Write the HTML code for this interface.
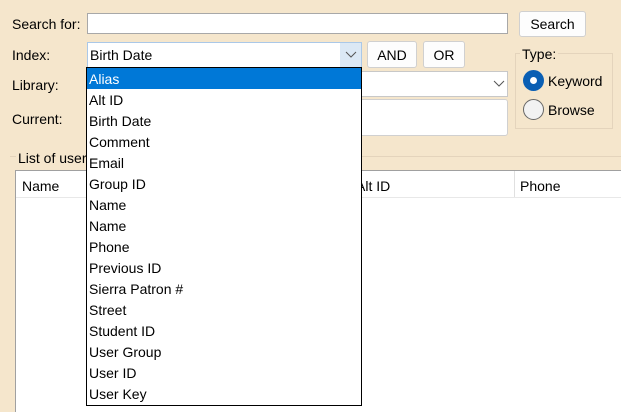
<!DOCTYPE html>
<html><head><style>
*{box-sizing:border-box;margin:0;padding:0}
body{width:621px;height:412px;overflow:hidden;background:#f5e6cc;font-family:"Liberation Sans",Arial,sans-serif;font-size:14px;color:#000;position:relative}
.a{position:absolute}
.lbl{position:absolute;font-size:14px}
.btn{position:absolute;background:#fdfdfd;border:1px solid #d0d0d0;border-radius:3px;text-align:center}
.item{height:21px;line-height:22px;padding-left:2px}
</style></head><body>
<div class="lbl" style="left:12px;top:16px">Search for:</div>
<div class="a" style="left:87px;top:13px;width:421px;height:21px;background:#fff;border:1px solid #a8a8a8"></div>
<div class="btn" style="left:519px;top:11px;width:67px;height:26px;line-height:25px">Search</div>

<div class="lbl" style="left:12px;top:47px">Index:</div>
<div class="a" style="left:87px;top:42px;width:275px;height:26px;background:#fff;border:1px solid #aac8e8"></div>
<div class="a" style="left:340px;top:43px;width:21px;height:24px;background:#dbe8f5"></div>
<div class="a" style="left:90px;top:47px">Birth Date</div>
<svg class="a" style="left:345px;top:51px" width="12" height="8"><path d="M1 1 L6 6 L11 1" fill="none" stroke="#555" stroke-width="1"/></svg>
<div class="btn" style="left:367px;top:41px;width:50px;height:27px;line-height:27px">AND</div>
<div class="btn" style="left:423px;top:41px;width:42px;height:27px;line-height:27px">OR</div>

<div class="lbl" style="left:12px;top:77px">Library:</div>
<div class="a" style="left:340px;top:71px;width:168px;height:26px;background:#fff;border:1px solid #c8c8c8"></div>
<svg class="a" style="left:493px;top:80px" width="12" height="8"><path d="M1 1 L6 6 L11 1" fill="none" stroke="#555" stroke-width="1"/></svg>
<div class="lbl" style="left:12px;top:111px">Current:</div>
<div class="a" style="left:340px;top:99px;width:168px;height:37px;background:#fff;border:1px solid #d0d0d0;border-radius:3px"></div>

<div class="a" style="left:515px;top:53px;width:98px;height:76px;border:1px solid #e4d4bc"></div>
<div class="a" style="left:520px;top:46px;background:#f5e6cc;padding:0 2px">Type:</div>
<div class="a" style="left:523px;top:70px;width:21px;height:21px;border-radius:50%;background:#0a5fb4"></div>
<div class="a" style="left:530px;top:77px;width:7px;height:7px;border-radius:50%;background:#fff"></div>
<div class="a" style="left:548px;top:73px">Keyword</div>
<div class="a" style="left:523px;top:99px;width:21px;height:21px;border-radius:50%;background:#f2f2f2;border:1px solid #666"></div>
<div class="a" style="left:548px;top:102px">Browse</div>

<div class="a" style="left:10px;top:156px;width:611px;height:1px;background:#e4d4bc"></div>
<div class="a" style="left:16px;top:150px;background:#f5e6cc;padding:0 2px">List of users</div>
<div class="a" style="left:15px;top:170px;width:606px;height:242px;background:#fff;border-left:1px solid #a0a0a0;border-top:1px solid #a0a0a0"></div>
<div class="a" style="left:16px;top:197px;width:605px;height:1px;background:#e8e8e8"></div>
<div class="a" style="left:514px;top:171px;width:1px;height:26px;background:#e0e0e0"></div>
<div class="a" style="left:22px;top:178px">Name</div>
<div class="a" style="left:356px;top:178px">Alt ID</div>
<div class="a" style="left:520px;top:178px">Phone</div>

<div class="a" style="left:86px;top:67px;width:276px;height:339px;background:#fff;border:1px solid #000">
<div class="item" style="background:#0078d7;color:#fff">Alias</div>
<div class="item">Alt ID</div>
<div class="item">Birth Date</div>
<div class="item">Comment</div>
<div class="item">Email</div>
<div class="item">Group ID</div>
<div class="item">Name</div>
<div class="item">Name</div>
<div class="item">Phone</div>
<div class="item">Previous ID</div>
<div class="item">Sierra Patron #</div>
<div class="item">Street</div>
<div class="item">Student ID</div>
<div class="item">User Group</div>
<div class="item">User ID</div>
<div class="item">User Key</div>
</div>
</body></html>
